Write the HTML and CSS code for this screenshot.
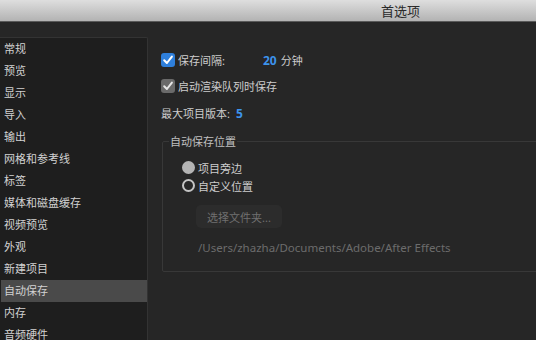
FILE: index.html
```html
<!DOCTYPE html>
<html lang="zh-CN">
<head>
  <meta charset="UTF-8">
  <title>首选项</title>
  <link rel="stylesheet" href="styles.css">
</head>
<body>
  <header class="titlebar">首选项</header>

  <div class="window">
    <ul class="nav">
      <li>常规</li>
      <li>预览</li>
      <li>显示</li>
      <li>导入</li>
      <li>输出</li>
      <li>网格和参考线</li>
      <li>标签</li>
      <li>媒体和磁盘缓存</li>
      <li>视频预览</li>
      <li>外观</li>
      <li>新建项目</li>
      <li class="active">自动保存</li>
      <li>内存</li>
      <li>音频硬件</li>
    </ul>

    <main class="panel">
      <div class="row row-first">
        <span class="check check-on">
          <svg width="14" height="14" viewBox="0 0 14 14"><path d="M3.2 7.2 L5.9 10 L10.9 3.6" fill="none" stroke="#fff" stroke-width="2" stroke-linecap="round" stroke-linejoin="round"/></svg>
        </span>
        <span class="label-wide">保存间隔:</span>
        <span class="value">20</span>
        <span class="unit">分钟</span>
      </div>

      <div class="row">
        <span class="check check-grey">
          <svg width="14" height="14" viewBox="0 0 14 14"><path d="M3.2 7.2 L5.9 10 L10.9 3.6" fill="none" stroke="#e6e6e6" stroke-width="2" stroke-linecap="round" stroke-linejoin="round"/></svg>
        </span>
        <span>启动渲染队列时保存</span>
      </div>

      <div class="row row-versions">
        <span>最大项目版本:</span>
        <span class="value">5</span>
      </div>

      <fieldset class="group">
        <legend>自动保存位置</legend>
        <div class="group-body">
          <div class="radio-row">
            <span class="radio radio-on"></span>
            <span>项目旁边</span>
          </div>
          <div class="radio-row">
            <span class="radio"></span>
            <span>自定义位置</span>
          </div>
          <button class="folder-btn" disabled>选择文件夹...</button>
          <p class="path">/Users/zhazha/Documents/Adobe/After Effects</p>
        </div>
      </fieldset>
    </main>
  </div>
</body>
</html>
```

FILE: styles.css
```css
body {
  margin: 0;
  height: 340px;
  overflow: hidden;
  background: #262626;
  color: #cdcdcd;
  font-family: "Noto Sans", "Noto Sans CJK SC", sans-serif;
  font-size: 11px;
}

/* Title bar */
.titlebar {
  height: 21px;
  line-height: 23px;
  padding-left: 381px;
  font-size: 13px;
  color: #2a2a2a;
  background: linear-gradient(#dedede, #b3b3b3);
  border-bottom: 1px solid #5a5a5a;
}

.window {
  display: flex;
  padding-top: 15px;
}

/* Sidebar list */
.nav {
  list-style: none;
  margin: 0;
  padding: 0;
  width: 147px;
  flex-shrink: 0;
  background: #1e1e1e;
  border-top: 1px solid #333;
  border-right: 1px solid #333;
  border-top-right-radius: 2px;
  height: 320px;
}

.nav li {
  height: 22px;
  line-height: 22px;
  margin-left: 1px;
  padding-left: 3px;
  color: #d2d2d2;
}

.nav li.active {
  background: #4a4a4a;
}

/* Main panel */
.panel {
  flex: 1;
  padding-left: 13px;
  min-width: 0;
}

.row {
  display: flex;
  align-items: center;
  height: 16px;
}

.row-first {
  margin-top: 15px;
}

.row + .row {
  margin-top: 10px;
}

.row.row-versions {
  margin-top: 11px;
}

.check {
  width: 14px;
  height: 14px;
  border-radius: 3px;
  margin-right: 3px;
  display: flex;
}

.check-on {
  background: #2e7fdb;
}

.check-grey {
  background: #6a6a6a;
}

.label-wide {
  width: 85px;
}

.value {
  color: #3d93ec;
  font-weight: bold;
  font-size: 12px;
}

.row-versions .value {
  margin-left: 6px;
}

.unit {
  margin-left: 4px;
}

/* Group box */
.group {
  margin: 12px -40px 0 1px;
  padding: 0 0 16px 0;
  border: 1px solid #383838;
  border-radius: 2px;
}

.group legend {
  padding: 0 1px;
  margin-left: 6px;
  color: #c0c0c0;
}

.group-body {
  padding: 9px 0 0 19px;
}

.radio-row {
  display: flex;
  align-items: center;
  height: 17px;
  margin-top: 1px;
}

.radio {
  width: 9px;
  height: 9px;
  border: 2px solid #c4c4c4;
  border-radius: 50%;
  margin-right: 3px;
}

.radio-on {
  background: #b4b4b4;
  border-color: #b4b4b4;
}

.folder-btn {
  display: block;
  margin: 11px 0 0 14px;
  padding: 0 11px;
  height: 23px;
  border: none;
  border-radius: 5px;
  background: #2c2c2c;
  color: #707070;
  font-family: inherit;
  font-size: 11px;
}

.path {
  margin: 12px 0 0 16px;
  color: #6c6c6c;
  font-size: 11.5px;
}
```
